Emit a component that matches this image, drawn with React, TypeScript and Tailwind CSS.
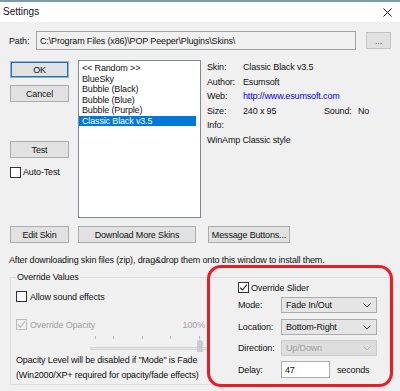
import React from "react";

function Btn({ children, className = "" }: { children: React.ReactNode; className?: string }) {
  return (
    <div className={"flex items-center justify-center h-[17px] bg-[#e1e1e1] border border-[#adadad] " + className}>
      {children}
    </div>
  );
}

function Check({ checked = false, disabled = false }: { checked?: boolean; disabled?: boolean }) {
  return (
    <span
      className={
        "w-[11px] h-[11px] shrink-0 border flex items-center justify-center " +
        (disabled ? "border-[#bcbcbc] bg-transparent" : "border-[#333333] bg-white")
      }
    >
      {checked && (
        <svg width="9" height="9" viewBox="0 0 9 9">
          <path d="M1 4.6 L3.4 7 L8 1.6" fill="none" stroke={disabled ? "#b4b4b4" : "#222222"} strokeWidth="1.1" />
        </svg>
      )}
    </span>
  );
}

function Select({ value, disabled = false }: { value: string; disabled?: boolean }) {
  return (
    <div
      className={
        "w-[96px] h-[16px] flex items-center justify-between pl-[4px] pr-[5px] border " +
        (disabled ? "bg-[#dedede] border-[#cccccc] text-[#a0a0a0]" : "bg-[#e5e5e5] border-[#acacac]")
      }
    >
      <span>{value}</span>
      <svg width="8" height="5" viewBox="0 0 8 5">
        <path d="M0.5 0.5 L4 4 L7.5 0.5" fill="none" stroke={disabled ? "#b0b0b0" : "#444444"} strokeWidth="1" />
      </svg>
    </div>
  );
}

const skins = ["<< Random >>", "BlueSky", "Bubble (Black)", "Bubble (Blue)", "Bubble (Purple)", "Classic Black v3.5"];

export default function App() {
  return (
    <div className="w-[400px] h-[391px] overflow-hidden relative bg-[#f0f0f0] text-[#111111] text-[9px] leading-[10px] tracking-[-0.15px] font-['Liberation_Sans',Arial,sans-serif]">
      {/* title bar */}
      <div className="h-[22px] bg-white border-t-2 border-[#7b9bb3] flex items-center justify-between pl-[3px] pr-[8px]">
        <span className="text-[10px] tracking-normal">Settings</span>
        <svg width="9" height="9" viewBox="0 0 9 9">
          <path d="M0.5 0.5 L8.5 8.5 M8.5 0.5 L0.5 8.5" stroke="#111111" strokeWidth="1" />
        </svg>
      </div>

      {/* path */}
      <div className="mt-[9px] h-[19px] flex items-center pl-[9px]">
        <span className="w-[27px]">Path:</span>
        <div className="w-[320px] h-[19px] border border-[#a0a0a0] flex items-center pl-[3px]">
          C:\Program Files (x86)\POP Peeper\Plugins\Skins\
        </div>
        <Btn className="ml-[10px] w-[25px] border-[#c4c4c4] text-[#555555]">...</Btn>
      </div>

      {/* main */}
      <div className="mt-[10px] flex pl-[10px]">
        <div className="w-[59px] flex flex-col">
          <Btn className="mt-[1px] border-[#0078d7] shadow-[inset_0_0_0_1px_#0078d7]">OK</Btn>
          <Btn className="mt-[7px]">Cancel</Btn>
          <Btn className="mt-[39px]">Test</Btn>
          <div className="mt-[8px] h-[12px] flex items-center">
            <Check />
            <span className="ml-[2px]">Auto-Test</span>
          </div>
        </div>

        <div className="ml-[9px] w-[123px] h-[158px] bg-white border border-[#828790] pt-[2px]">
          {skins.map((s, i) => (
            <div
              key={s}
              className={
                "h-[10.5px] mr-[4px] pl-[3px] flex items-center " + (i === 5 ? "bg-[#0078d7] text-white" : "")
              }
            >
              {s}
            </div>
          ))}
        </div>

        <div className="ml-[6px] flex flex-col">
          <div className="h-[14.5px] flex items-center">
            <span className="w-[36px]">Skin:</span>
            <span>Classic Black v3.5</span>
          </div>
          <div className="h-[14.5px] flex items-center">
            <span className="w-[36px]">Author:</span>
            <span>Esumsoft</span>
          </div>
          <div className="h-[14.5px] flex items-center">
            <span className="w-[36px]">Web:</span>
            <span className="text-[#0000ff]">http://www.esumsoft.com</span>
          </div>
          <div className="h-[14.5px] flex items-center">
            <span className="w-[36px]">Size:</span>
            <span className="w-[81px]">240 x 95</span>
            <span className="w-[34px]">Sound:</span>
            <span>No</span>
          </div>
          <div className="h-[14.5px] flex items-center">
            <span>Info:</span>
          </div>
          <div className="h-[14.5px] flex items-center">
            <span>WinAmp Classic style</span>
          </div>
        </div>
      </div>

      {/* bottom buttons */}
      <div className="mt-[8px] flex pl-[10px]">
        <Btn className="w-[59px]">Edit Skin</Btn>
        <Btn className="ml-[9px] w-[118px]">Download More Skins</Btn>
        <Btn className="ml-[12px] w-[82px]">Message Buttons...</Btn>
      </div>

      <div className="mt-[12px] pl-[9px] h-[10px]">
        After downloading skin files (zip), drag&amp;drop them onto this window to install them.
      </div>

      {/* group box */}
      <fieldset className="mt-[7px] ml-[10px] w-[380px] h-[113px] border border-[#dcdcdc]">
        <legend className="ml-[5px] px-[1px] leading-[10px]">Override Values</legend>
        <div className="flex">
          <div className="w-[197px] pl-[5px] flex flex-col">
            <div className="mt-[8px] h-[13px] flex items-center">
              <Check />
              <span className="ml-[3px]">Allow sound effects</span>
            </div>
            <div className="mt-[15px] h-[13px] flex items-center pr-[3px]">
              <Check checked disabled />
              <span className="ml-[3px] text-[#a0a0a0]">Override Opacity</span>
              <span className="ml-auto text-[#a0a0a0]">100%</span>
            </div>
            <div className="mt-[4px] h-[20px] relative">
              <span className="absolute top-[1px] left-[79px] w-px h-[3px] bg-[#b8b8b8]" />
              <span className="absolute top-[1px] left-[97px] w-px h-[3px] bg-[#b8b8b8]" />
              <span className="absolute top-[1px] left-[126px] w-px h-[3px] bg-[#b8b8b8]" />
              <span className="absolute top-[1px] left-[154px] w-px h-[3px] bg-[#b8b8b8]" />
              <span className="absolute top-[1px] left-[183px] w-px h-[3px] bg-[#b8b8b8]" />
              <span className="absolute top-[12px] left-[74px] w-[120px] h-[3px] bg-[#e6e6e6] border border-[#d6d6d6]" />
              <span className="absolute top-[5px] left-[181px] w-[6px] h-[12px] bg-[#cccccc] rounded-t-[3px]" />
            </div>
            <div className="h-[10px]">Opacity Level will be disabled if "Mode" is Fade</div>
            <div className="mt-[5px] h-[10px]">(Win2000/XP+ required for opacity/fade effects)</div>
          </div>

          <div className="pl-[30px] flex flex-col">
            <div className="h-[11px] flex items-center">
              <Check checked />
              <span className="ml-[2px]">Override Slider</span>
            </div>
            <div className="mt-[4px] h-[16px] flex items-center">
              <span className="w-[43px]">Mode:</span>
              <Select value="Fade In/Out" />
            </div>
            <div className="mt-[6px] h-[16px] flex items-center">
              <span className="w-[43px]">Location:</span>
              <Select value="Bottom-Right" />
            </div>
            <div className="mt-[5px] h-[16px] flex items-center">
              <span className="w-[43px]">Direction:</span>
              <Select value="Up/Down" disabled />
            </div>
            <div className="mt-[5px] h-[17px] flex items-center">
              <span className="w-[43px]">Delay:</span>
              <div className="w-[49px] h-[17px] bg-white border border-[#abadb3] flex items-center pl-[3px]">47</div>
              <span className="ml-[7px]">seconds</span>
            </div>
          </div>
        </div>
      </fieldset>

      {/* red annotation */}
      <div className="absolute left-[207px] top-[265px] w-[186px] h-[122px] border-[3.5px] border-[#ed1c24] rounded-[14px] pointer-events-none" />
    </div>
  );
}
